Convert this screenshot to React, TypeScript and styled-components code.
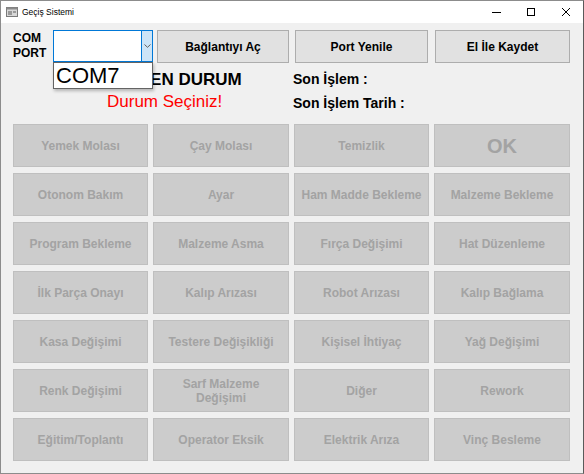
import React from "react";
import styled, { createGlobalStyle } from "styled-components";

const Global = createGlobalStyle`
  html, body { margin: 0; padding: 0; background: #f0f0f0; }
  * { box-sizing: border-box; }
`;

const Window = styled.div`
  width: 584px;
  height: 474px;
  background: #f0f0f0;
  border: 1px solid #8c8c8c;
  border-right-color: #5a5a5a;
  display: flex;
  flex-direction: column;
  font-family: "Liberation Sans", Arial, sans-serif;
  overflow: hidden;
`;

const TitleBar = styled.div`
  height: 22px;
  background: #ffffff;
  display: flex;
  align-items: center;
  padding-left: 5px;
  flex-shrink: 0;
`;

const TitleText = styled.span`
  font-family: "Liberation Sans", Arial, sans-serif;
  font-size: 8.5px;
  color: #000;
  margin-left: 4px;
`;

const Controls = styled.div`
  margin-left: auto;
  display: flex;
  height: 100%;
`;

const Ctrl = styled.div`
  width: 34.5px;
  height: 100%;
  display: flex;
  align-items: center;
  justify-content: center;
`;

const Client = styled.div`
  flex: 1;
  display: flex;
  flex-direction: column;
  padding: 7px 0 0 12px;
`;

const TopRow = styled.div`
  display: flex;
  align-items: flex-start;
  height: 33px;
`;

const ComLabel = styled.div`
  width: 40px;
  padding-top: 1px;
  font-size: 12px;
  font-weight: bold;
  line-height: 15px;
  color: #000;
`;

const ComboWrap = styled.div`
  position: relative;
  width: 100px;
  height: 32px;
  margin-right: 4px;
`;

const Combo = styled.div`
  width: 100%;
  height: 100%;
  background: #fff;
  border: 1px solid #0078d7;
  display: flex;
  justify-content: flex-end;
`;

const ComboArrow = styled.div`
  width: 11px;
  height: 100%;
  background: #cce4f7;
  border-left: 1px solid #0078d7;
  display: flex;
  align-items: center;
  justify-content: center;
`;

const DropList = styled.div`
  position: absolute;
  left: 0;
  top: 32px;
  width: 100px;
  height: 27px;
  background: #fff;
  border: 1px solid #646464;
  box-shadow: 1px 2px 3px rgba(0, 0, 0, 0.25);
  font-size: 22px;
  line-height: 25px;
  padding-left: 2px;
  color: #000;
  z-index: 2;
`;

const TopButton = styled.div<{ $w: number; $ml?: number }>`
  width: ${(p) => p.$w}px;
  height: 33px;
  margin-left: ${(p) => p.$ml ?? 0}px;
  background: #e1e1e1;
  border: 1px solid #adadad;
  display: flex;
  align-items: center;
  justify-content: center;
  font-size: 12px;
  font-weight: bold;
  color: #000;
`;

const StatusRow = styled.div`
  display: flex;
  height: 61px;
`;

const StatusLeft = styled.div`
  width: 280px;
  display: flex;
  flex-direction: column;
  padding-top: 7px;
`;

const Current = styled.div`
  font-size: 17px;
  font-weight: bold;
  line-height: 19px;
  padding-left: 87px;
  color: #000;
`;

const Choose = styled.div`
  font-size: 17px;
  line-height: 19px;
  margin-top: 3px;
  padding-left: 94px;
  color: #ff0000;
`;

const StatusRight = styled.div`
  display: flex;
  flex-direction: column;
  padding-top: 8px;
  gap: 7px;
`;

const Info = styled.div`
  font-size: 14px;
  font-weight: bold;
  line-height: 17px;
  color: #000;
`;

const Grid = styled.div`
  display: grid;
  grid-template-columns: 135px 136px 135px 136px;
  grid-auto-rows: 43px;
  column-gap: 5px;
  row-gap: 6px;
`;

const StateButton = styled.div<{ $big?: boolean }>`
  background: #cccccc;
  border: 1px solid #bfbfbf;
  display: flex;
  align-items: center;
  justify-content: center;
  text-align: center;
  color: #a3a3a3;
  font-weight: bold;
  font-size: ${(p) => (p.$big ? "20px" : "12px")};
  line-height: 14px;
  padding: 0 2px;
`;

const items = [
  "Yemek Molası", "Çay Molası", "Temizlik", "OK",
  "Otonom Bakım", "Ayar", "Ham Madde Bekleme", "Malzeme Bekleme",
  "Program Bekleme", "Malzeme Asma", "Fırça Değişimi", "Hat Düzenleme",
  "İlk Parça Onayı", "Kalıp Arızası", "Robot Arızası", "Kalıp Bağlama",
  "Kasa Değişimi", "Testere Değişikliği", "Kişisel İhtiyaç", "Yağ Değişimi",
  "Renk Değişimi", "Sarf Malzeme Değişimi", "Diğer", "Rework",
  "Eğitim/Toplantı", "Operator Eksik", "Elektrik Arıza", "Vinç Besleme",
];

export default function App() {
  return (
    <>
      <Global />
      <Window>
        <TitleBar>
          <svg width="12" height="10" viewBox="0 0 12 10">
            <rect x="0.5" y="0.5" width="11" height="9" fill="#d8d8d8" stroke="#7a7a7a" />
            <rect x="0.5" y="0.5" width="11" height="2" fill="#8a8a8a" />
            <rect x="2" y="4" width="4" height="4" fill="#9a9a9a" />
            <rect x="7" y="4" width="3" height="2" fill="#9a9a9a" />
          </svg>
          <TitleText>Geçiş Sistemi</TitleText>
          <Controls>
            <Ctrl>
              <svg width="9" height="8" viewBox="0 0 9 8">
                <line x1="0" y1="4.5" x2="9" y2="4.5" stroke="#000" strokeWidth="1" />
              </svg>
            </Ctrl>
            <Ctrl>
              <svg width="8" height="8" viewBox="0 0 8 8">
                <rect x="0.5" y="0.5" width="7" height="7" fill="none" stroke="#000" strokeWidth="1" />
              </svg>
            </Ctrl>
            <Ctrl>
              <svg width="8" height="8" viewBox="0 0 8 8">
                <path d="M0 0 L8 8 M8 0 L0 8" stroke="#000" strokeWidth="1" />
              </svg>
            </Ctrl>
          </Controls>
        </TitleBar>
        <Client>
          <TopRow>
            <ComLabel>
              COM
              <br />
              PORT
            </ComLabel>
            <ComboWrap>
              <Combo>
                <ComboArrow>
                  <svg width="7" height="4" viewBox="0 0 7 4">
                    <path d="M0.5 0.5 L3.5 3.3 L6.5 0.5" fill="none" stroke="#606060" strokeWidth="1" />
                  </svg>
                </ComboArrow>
              </Combo>
              <DropList>COM7</DropList>
            </ComboWrap>
            <TopButton $w={132}>Bağlantıyı Aç</TopButton>
            <TopButton $w={133} $ml={6}>Port Yenile</TopButton>
            <TopButton $w={135} $ml={7}>El İle Kaydet</TopButton>
          </TopRow>
          <StatusRow>
            <StatusLeft>
              <Current>SEÇİLEN DURUM</Current>
              <Choose>Durum Seçiniz!</Choose>
            </StatusLeft>
            <StatusRight>
              <Info>Son İşlem :</Info>
              <Info>Son İşlem Tarih :</Info>
            </StatusRight>
          </StatusRow>
          <Grid>
            {items.map((t) => (
              <StateButton key={t} $big={t === "OK"}>
                {t}
              </StateButton>
            ))}
          </Grid>
        </Client>
      </Window>
    </>
  );
}
